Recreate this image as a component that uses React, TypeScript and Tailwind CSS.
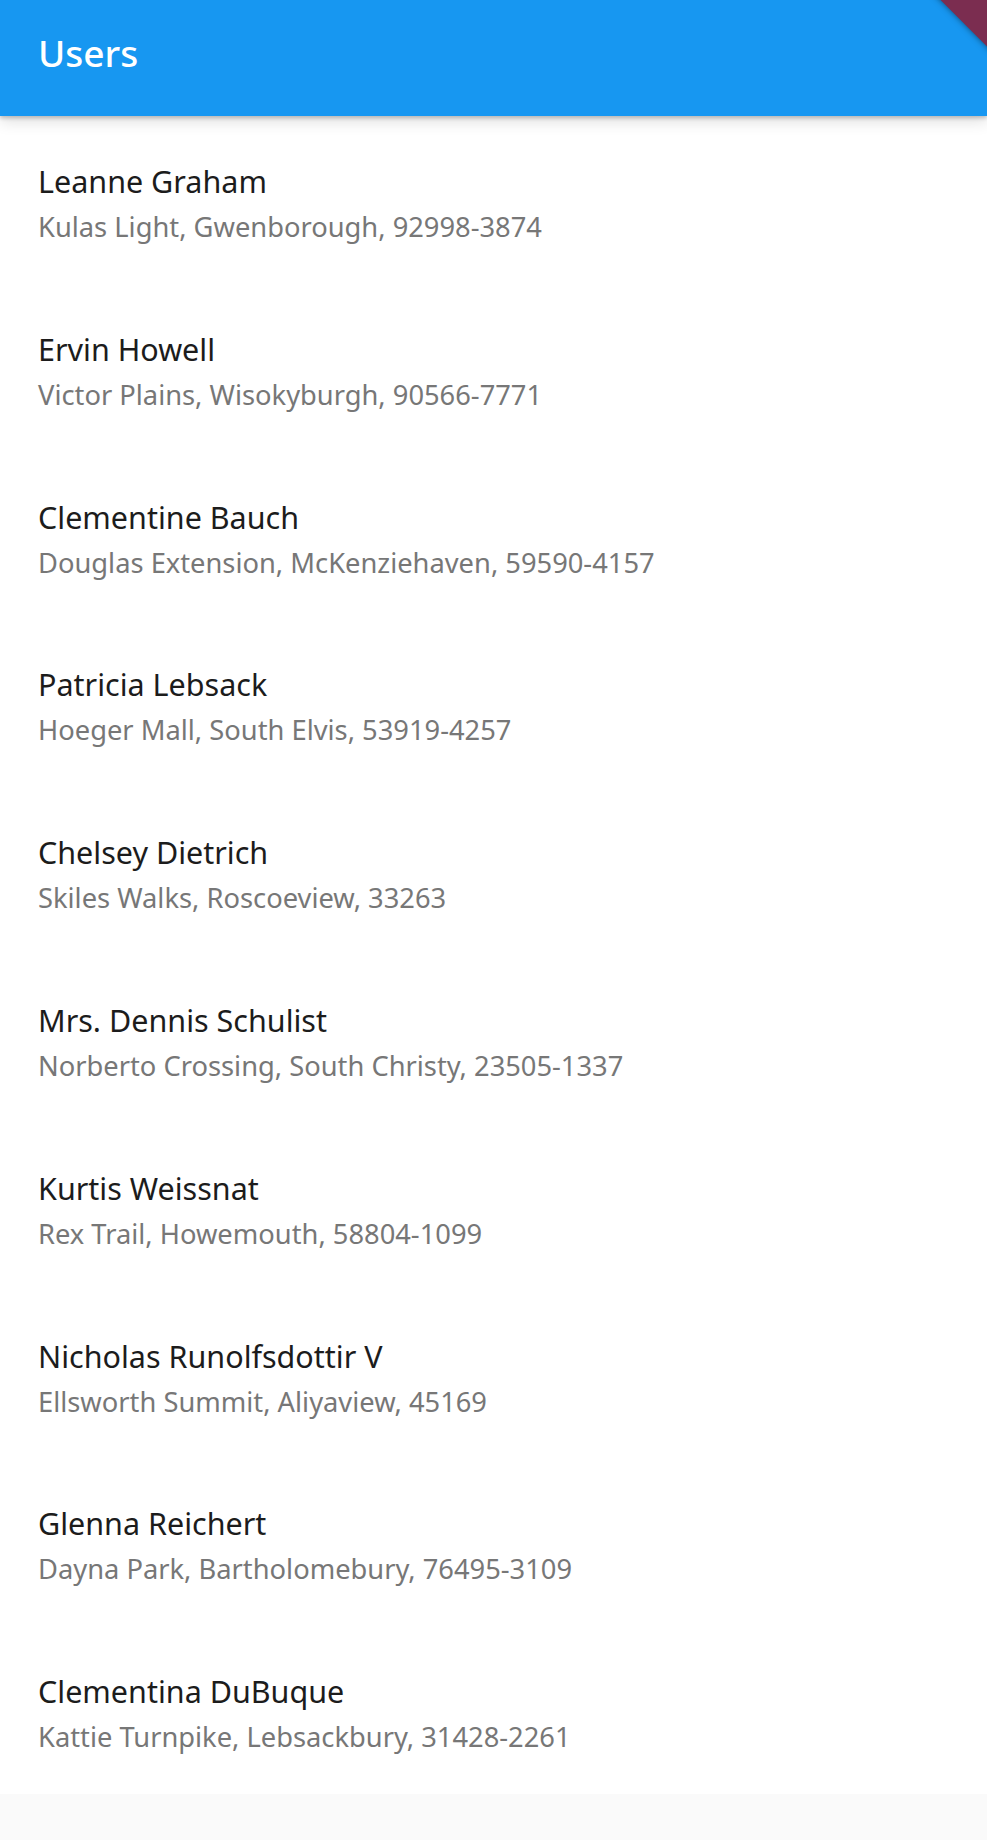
import React from "react";

const users = [
  ["Leanne Graham", "Kulas Light, Gwenborough, 92998-3874"],
  ["Ervin Howell", "Victor Plains, Wisokyburgh, 90566-7771"],
  ["Clementine Bauch", "Douglas Extension, McKenziehaven, 59590-4157"],
  ["Patricia Lebsack", "Hoeger Mall, South Elvis, 53919-4257"],
  ["Chelsey Dietrich", "Skiles Walks, Roscoeview, 33263"],
  ["Mrs. Dennis Schulist", "Norberto Crossing, South Christy, 23505-1337"],
  ["Kurtis Weissnat", "Rex Trail, Howemouth, 58804-1099"],
  ["Nicholas Runolfsdottir V", "Ellsworth Summit, Aliyaview, 45169"],
  ["Glenna Reichert", "Dayna Park, Bartholomebury, 76495-3109"],
  ["Clementina DuBuque", "Kattie Turnpike, Lebsackbury, 31428-2261"],
];

export default function App() {
  return (
    <div className="relative w-[987px] h-[1840px] overflow-hidden bg-[#fafafa] font-['Noto_Sans',sans-serif]">
      <header className="relative z-10 h-[116px] bg-[#1797f1] flex items-center pl-[38px] pb-[12px] shadow-[0_2px_4px_rgba(0,0,0,0.22),0_6px_14px_rgba(0,0,0,0.12)]">
        <h1 className="text-white text-[37px] font-medium leading-none">Users</h1>
      </header>
      <ul className="bg-white">
        {users.map(([name, addr]) => (
          <li key={name} className="h-[167.8px] pl-[38px] pt-[45px] flex flex-col">
            <span className="text-[30.5px] leading-[40px] text-[#1c1c1c]">{name}</span>
            <span className="text-[27.3px] leading-[40px] mt-[6px] text-[#777777]">{addr}</span>
          </li>
        ))}
      </ul>
      <div className="absolute top-0 right-0 z-20 w-[100px] h-[100px] overflow-hidden pointer-events-none">
        <div className="absolute left-[-2px] top-[-28px] w-[200px] h-[60px] rotate-45 bg-[#7b2d50] shadow-[0_0_6px_rgba(0,0,0,0.5)]" />
      </div>
    </div>
  );
}
